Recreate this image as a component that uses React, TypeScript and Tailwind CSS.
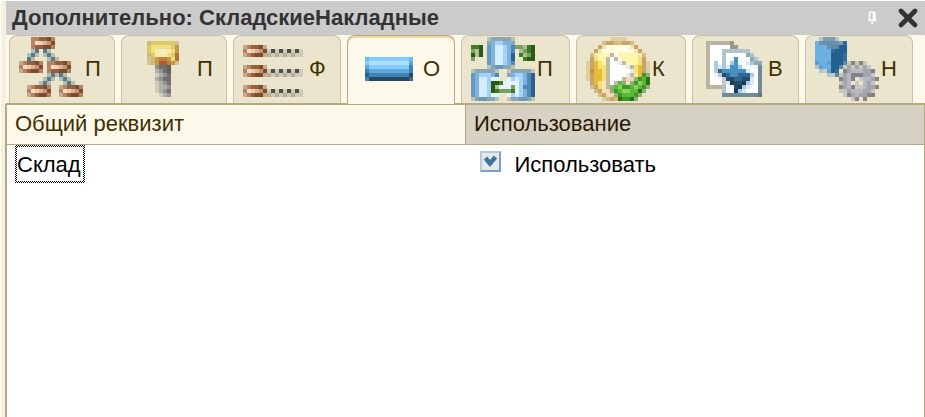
import React, { useState } from 'react';
import clsx from 'clsx';

interface PixelArt {
  rows: string[];
  colors: Record<string, string>;
}

interface TabItem {
  id: string;
  label: string;
  width: string;
  icon: PixelArt;
}

const copper = {
  p: '#c9a98a',
  q: '#b5835f',
  r: '#98603a',
  s: '#7e4c2a',
  t: '#f7dcc8',
  u: '#ecccb4',
  v: '#d8b498',
  w: '#c09474',
};

const treeIcon: PixelArt = {
  colors: { ...copper, d: '#5b7b8c', l: '#b4beb0' },
  rows: [
    '...qqrrsq.......',
    '...qtuvws.......',
    '...qrrssq.......',
    '...ld.dl........',
    '..ldl.ldl.......',
    '..dl...ldl......',
    'pqrrsq.qqrrsq...',
    'qtuvws.qtuvws...',
    'pqrssq.qrrssq...',
    '.......ldldl....',
    '......ldl.ldl...',
    '.....ldl...ldl..',
    '..pqrrsq..pqrrsq',
    '..qtuvws..qtuvws',
    '..pqrssq..pqrssq',
  ],
};

const keyIcon: PixelArt = {
  colors: {
    a: '#cdba72', b: '#dcc868', c: '#f0e07c', d: '#f4eca8', e: '#f0ecd0',
    f: '#c49a48', g: '#b07038', h: '#c47c38', i: '#a85c3c', j: '#d8c09a',
    k: '#d0ccba', l: '#b0aea8', m: '#939393', n: '#707070', o: '#5e5e5e',
  },
  rows: [
    '................',
    '....abbbbbbj....',
    '....bcccccbf....',
    '....bcdeedcf....',
    '....abdddcbg....',
    '....jafhhfcg....',
    '....jafiihfj....',
    '......mnno......',
    '......lmno......',
    '......klmn......',
    '......lmnn......',
    '......klmn......',
    '......kllm......',
    '......klmn......',
    '.......klm......',
  ],
};

const formsIcon: PixelArt = {
  colors: { ...copper, k: '#4d4d4d', l: '#cfcab4', n: '#b3b09c' },
  rows: [
    '................',
    '................',
    'pqrrsp..........',
    'qtuvwslklklklkl.',
    'pqrsspnlnlnlnll.',
    '................',
    '................',
    'pqrrsp..........',
    'qtuvwslklklklkl.',
    'pqrsspnlnlnlnll.',
    '................',
    '................',
    'pqrrsp..........',
    'qtuvwslklklklkl.',
    'pqrsspnlnlnlnll.',
  ],
};

const attributeIcon: PixelArt = {
  colors: {
    a: '#6cbcf4', b: '#84ccff', c: '#b0e0ff', d: '#64a8d8', e: '#3f84b8',
    f: '#26648f', g: '#28485f', h: '#3c6c90',
  },
  rows: [
    '................',
    '................',
    '................',
    '................',
    '................',
    '..abbbbbbbbbba..',
    '..bccccccccccd..',
    '..dbbbbbbbbbbe..',
    '..edddddddddde..',
    '..feeeeeeeeeeg..',
    '..eggggggggggh..',
  ],
};

const stackIcon: PixelArt = {
  colors: {
    a: '#bcc4b4', b: '#8aa6b4', c: '#6898bc', d: '#80b0dc', e: '#a4d2f6',
    f: '#d4ecff', g: '#5088b4', h: '#2c5f90', i: '#e4f4fc',
    x: '#3f7d24', y: '#285c14', z: '#78a064', w: '#aac090',
  },
  rows: [
    '....abbbbba.....',
    '....bdeeddb.....',
    'xxy.cdffedgzzwxy',
    'zwy.cdffedg.wzxy',
    'ywy.cdffedh.xwzy',
    'z...cdffedh..xyy',
    '....cdffedg.....',
    '....abccbba.....',
    'abbbbba..abbbbba',
    'cdeeedg..bdeedgh',
    'cdffeii..iefedgh',
    'cdffeyyxiiiiedgh',
    'cdffeywiiizieggh',
    'cdffeyxzzzxiedgh',
    'cdffeii..iefedgh',
    'abccbba..abbccba',
  ],
};

const playIcon: PixelArt = {
  colors: {
    a: '#dccfa6', b: '#c8a468', c: '#d8bc84', d: '#f4e6b4', e: '#fffbe0',
    f: '#fff4ac', g: '#f6e070', h: '#e4bc3c', i: '#c8941c', j: '#f8e8b8',
    k: '#c0baa4', w: '#ffffff', v: '#ecebea', m: '#f0dcb4',
    x: '#5cb838', y: '#3c9820', z: '#287010', u: '#88d460', l: '#8cb078',
  },
  rows: [
    '......aaaa......',
    '....cbbccbbc....',
    '...bdeeeeeedb...',
    '..bdeeeeeeeedb..',
    '.cdfffkefffffdc.',
    '.bgffkwkeffffgb.',
    'abhgfkwwvkfffgba',
    'abhggkwwwwvkghba',
    'aihhgkwwwwwvghba',
    'abhhgkwwwwvkjhyl',
    'abhhgkwwwkmmlyxz',
    '.bhgjkwkxlmlyuxz',
    '.cbgjklxuyyxuxyl',
    '..cbdmlyxuuxxzl.',
    '...cbmmlyxxxyl..',
    '....acbczyyzl...',
  ],
};

const inputIcon: PixelArt = {
  colors: {
    a: '#b8b4a0', b: '#9c9886', w: '#ffffff', v: '#f0f6fc', u: '#dce9f2',
    c: '#b0c4cc', d: '#90a8b4', e: '#708c9c', f: '#607884',
    g: '#a4cce8', h: '#4890c0', i: '#2c6894', j: '#244c68', k: '#203848', l: '#c4c8cc',
  },
  rows: [
    '................',
    '.aaaaaab........',
    '.awwwwwbb.......',
    '.awwwccccccc....',
    '.awwwcwwwwwdc...',
    '.awwwcwvhvwwdc..',
    '.awgwcwghvwucdd.',
    '.awguguhhgwwvve.',
    '.awlihhhhhhuwwe.',
    '.awvljihhiiigwe.',
    '.awwvljjiijjuwe.',
    '.awwwlukjjkguwe.',
    '.aaaacwvjkguwwe.',
    '.....cwwkguwwwe.',
    '.....eeeeeeeeef.',
  ],
};

const otherIcon: PixelArt = {
  colors: {
    a: '#b4c4c8', b: '#809cac', c: '#6c90ac', d: '#6ab0e0', e: '#5c9fd0',
    f: '#24608c', g: '#306fa0', h: '#5c88a4', i: '#c8ccc0',
    m: '#a4a4ac', n: '#b8b8c0', o: '#808088', p: '#8c8480', q: '#c8c6c0',
  },
  rows: [
    '.abbba..........',
    'dcccccbg........',
    'dddchhff........',
    'ddddgfff........',
    'ddddfffg........',
    'ddddfffg........',
    'eddefffhqpqpq...',
    'aeddffhqmqmqmq..',
    '.aiefg.omnnnmmo.',
    '...aihqmnpoommq.',
    '......omno.qnnmp',
    '......qmn.q.nmq.',
    '......pmnoqqnmmp',
    '......qqmnnnmmq.',
    '.......qpmnmmpo.',
    '.........qp.p...',
  ],
};

const tabs: TabItem[] = [
  { id: 'subsystems', label: 'П', width: 'w-[106px]', icon: treeIcon },
  { id: 'rights', label: 'П', width: 'w-[106px]', icon: keyIcon },
  { id: 'options', label: 'Ф', width: 'w-[108px]', icon: formsIcon },
  { id: 'attributes', label: 'О', width: 'w-[108px]', icon: attributeIcon },
  { id: 'exchange', label: 'П', width: 'w-[109px]', icon: stackIcon },
  { id: 'commands', label: 'К', width: 'w-[110px]', icon: playIcon },
  { id: 'input', label: 'В', width: 'w-[107px]', icon: inputIcon },
  { id: 'settings', label: 'Н', width: 'w-[108px]', icon: otherIcon },
];

const PixelIcon = ({ art }: { art: PixelArt }) => (
  <svg viewBox="0 0 16 16" className="w-16 h-16 shrink-0" shapeRendering="crispEdges" aria-hidden="true">
    {art.rows.map((row, y) =>
      row.split('').map((ch, x) =>
        ch === '.' ? null : <rect key={`${x}-${y}`} x={x} y={y} width="1" height="1" fill={art.colors[ch]} />
      )
    )}
  </svg>
);

const App = () => {
  const [active, setActive] = useState('attributes');
  const [used, setUsed] = useState(true);

  return (
    <div className="flex flex-col min-h-screen pl-px pt-px bg-white font-['Liberation_Sans',Arial,sans-serif] text-[22px] leading-6">
      <div className="flex flex-col flex-1 pl-1 bg-[#f5f1dc]">
        {/* Title bar */}
        <header className="flex items-center ml-px h-[34px] pl-1.5 pr-1.5 bg-[#cbcbcb] text-[#333333]">
          <h1 className="flex-1 font-bold">Дополнительно: СкладскиеНакладные</h1>
          <button type="button" aria-label="Закрепить" className="mr-5">
            <svg viewBox="0 0 10 14" className="w-2.5 h-3.5" fill="none" stroke="#ffffff" strokeWidth="1.6">
              <path d="M2.5 9V2.5Q2.5 1 4 1H6.5Q8 1 8 2.5V9M1 9.2H9.4M5.2 9V13.5M6.5 2V9" />
            </svg>
          </button>
          <button type="button" aria-label="Закрыть">
            <svg viewBox="0 0 22 20" className="w-[22px] h-5" stroke="#333333" strokeWidth="4.6" strokeLinecap="round">
              <path d="M4 3L18 17M18 3L4 17" />
            </svg>
          </button>
        </header>

        {/* Tabs */}
        <div role="tablist" className="flex gap-1.5 ml-px pl-[3px] h-[69px] bg-[#fcf9ea] border-b border-[#b4a983]">
          {tabs.map((tab) => (
            <button
              key={tab.id}
              type="button"
              role="tab"
              aria-selected={tab.id === active}
              onClick={() => setActive(tab.id)}
              className={clsx(
                'flex items-start gap-0.5 shrink-0 pl-[9px] pt-px border border-b-0 rounded-t-lg overflow-hidden text-[#403000]',
                tab.width,
                tab.id === active
                  ? '-mb-px bg-[#fcf9ea] border-[#b4a983] shadow-[inset_0_2px_0_#f9d795]'
                  : 'bg-[#ebe5cd] border-[#c9c1a6]'
              )}
            >
              <PixelIcon art={tab.icon} />
              <span className="leading-16">{tab.label}</span>
            </button>
          ))}
        </div>

        {/* Attribute list */}
        <div className="flex-1 bg-white border-t border-l-2 border-r border-[#b4a983]">
          <table className="w-full table-fixed border-collapse text-left">
            <thead>
              <tr className="h-[39px] border-b border-[#b4a983] text-[#403000]">
                <th className="w-1/2 pl-2 font-normal bg-[#fcf9ea] border-r border-[#b4a983]">Общий реквизит</th>
                <th className="w-1/2 pl-2 font-normal bg-[#d5d2c3] text-[#2b1600]">Использование</th>
              </tr>
            </thead>
            <tbody className="text-black">
              <tr>
                <td className="pl-2 align-top">
                  <div className="w-fit p-0.5 bg-[repeating-conic-gradient(#000_0_25%,#fff_0_50%)] bg-[length:2px_2px]">
                    <div className="pt-1.5 pb-1 pr-0.5 bg-white">Склад</div>
                  </div>
                </td>
                <td className="pl-3.5 align-top">
                  <label className="flex items-start gap-3.5 pt-1.5">
                    <span className="relative w-[21px] h-[21px]">
                      <input
                        type="checkbox"
                        checked={used}
                        onChange={(e) => setUsed(e.target.checked)}
                        className="block w-[21px] h-[21px] appearance-none border-2 border-[#b4cbdc] border-r-[#7d9fba] border-b-[#7d9fba] bg-[#e4e9ed]"
                      />
                      {used && (
                        <svg viewBox="0 0 21 21" className="absolute inset-0 pointer-events-none" fill="none">
                          <path d="M5.5 7L10 12.5L15.5 6" stroke="#3f74a0" strokeWidth="4.4" />
                        </svg>
                      )}
                    </span>
                    <span className="pt-0.5">Использовать</span>
                  </label>
                </td>
              </tr>
            </tbody>
          </table>
        </div>
      </div>
    </div>
  );
};

export default App;
